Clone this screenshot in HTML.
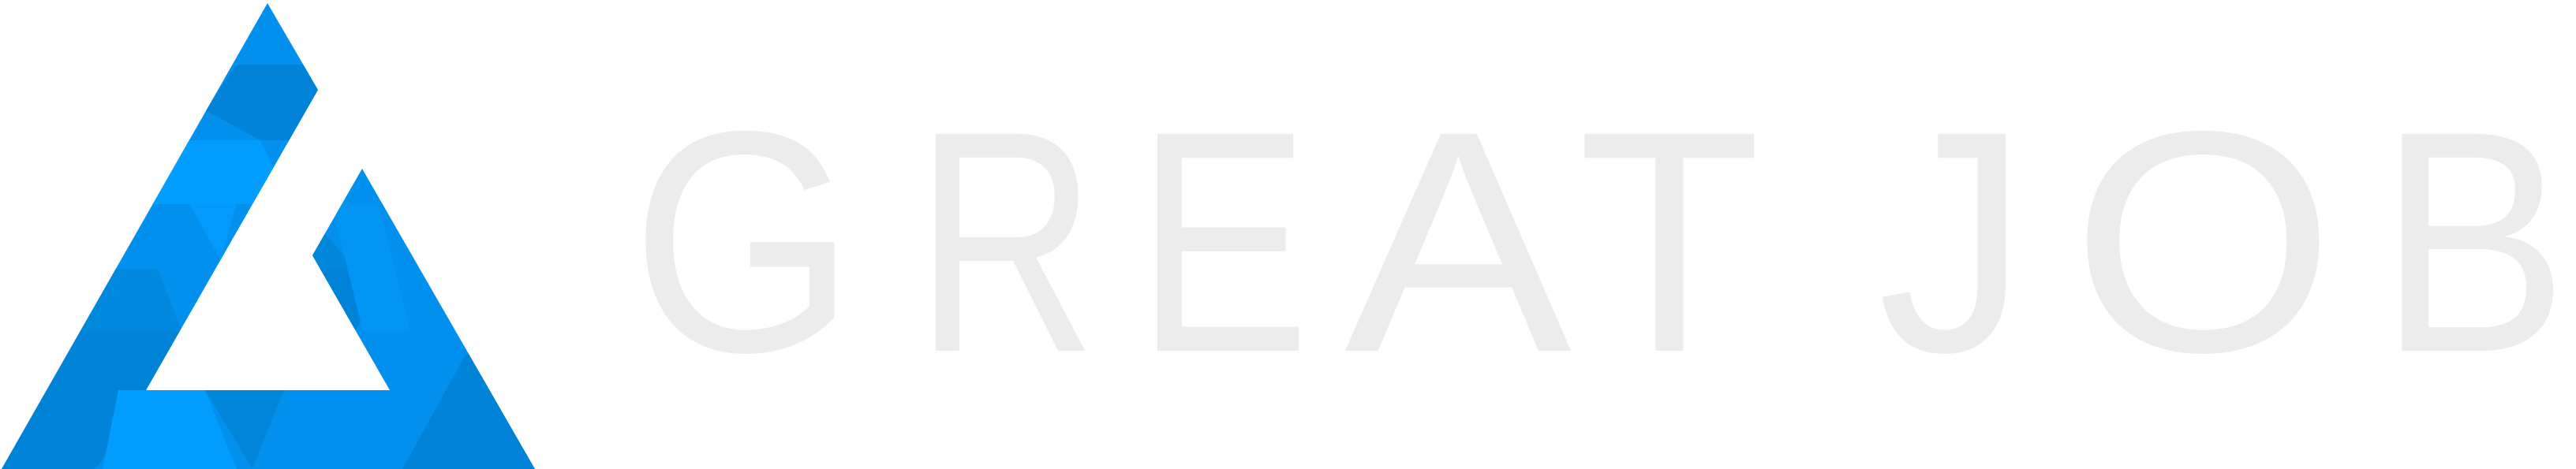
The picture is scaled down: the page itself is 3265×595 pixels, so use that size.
<!DOCTYPE html>
<html><head><meta charset="utf-8"><style>
html,body{margin:0;padding:0;background:#fff;width:3265px;height:595px;overflow:hidden}
svg{display:block}
</style></head><body>
<svg width="3265" height="595" viewBox="0 0 3265 595" xmlns="http://www.w3.org/2000/svg">
<defs>
<clipPath id="c"><path d="M339,4 L403,114 L185,495 L494,495 L396,324 L459,214 L678,595 L2,595 Z"/></clipPath>
</defs>
<g clip-path="url(#c)">
<rect x="0" y="0" width="700" height="595" fill="#0290ee"/>
<polygon points="300,82 420,82 420,178 330,178 260,140" fill="#0083d6"/>
<polygon points="230,178 330,178 370,259 190,259" fill="#039cff"/>
<polygon points="240,259 300,259 280,330" fill="#0399fd"/>
<polygon points="100,341 200,341 230,420 60,420" fill="#0088dc"/>
<polygon points="0,420 230,420 200,495 120,595 0,595" fill="#0083d6"/>
<polygon points="150,495 260,495 300,595 130,595" fill="#039cff"/>
<polygon points="260,495 360,495 320,595" fill="#0085d8"/>
<polygon points="380,260 450,340 420,420 400,400" fill="#0087da"/>
<polygon points="400,341 500,341 450,420" fill="#0083d6"/>
<polygon points="590,450 700,450 700,595 510,595" fill="#0083d6"/>
<polygon points="420,259 480,259 520,420 460,420" fill="#0295f4"/>
</g>
<g fill="#ececec" font-family="Liberation Sans, sans-serif" font-size="400">
<text x="800" y="445" textLength="285" lengthAdjust="spacingAndGlyphs">G</text>
<text x="1160" y="445" textLength="230" lengthAdjust="spacingAndGlyphs">R</text>
<text x="1440" y="445" textLength="220" lengthAdjust="spacingAndGlyphs">E</text>
<text x="1704" y="445" textLength="288" lengthAdjust="spacingAndGlyphs">A</text>
<text x="2000" y="445" textLength="232" lengthAdjust="spacingAndGlyphs">T</text>
<text x="2380" y="445" textLength="190" lengthAdjust="spacingAndGlyphs">J</text>
<text x="2625" y="445" textLength="335" lengthAdjust="spacingAndGlyphs">O</text>
<text x="3015" y="445" textLength="240" lengthAdjust="spacingAndGlyphs">B</text>
</g>
</svg>
</body></html>
